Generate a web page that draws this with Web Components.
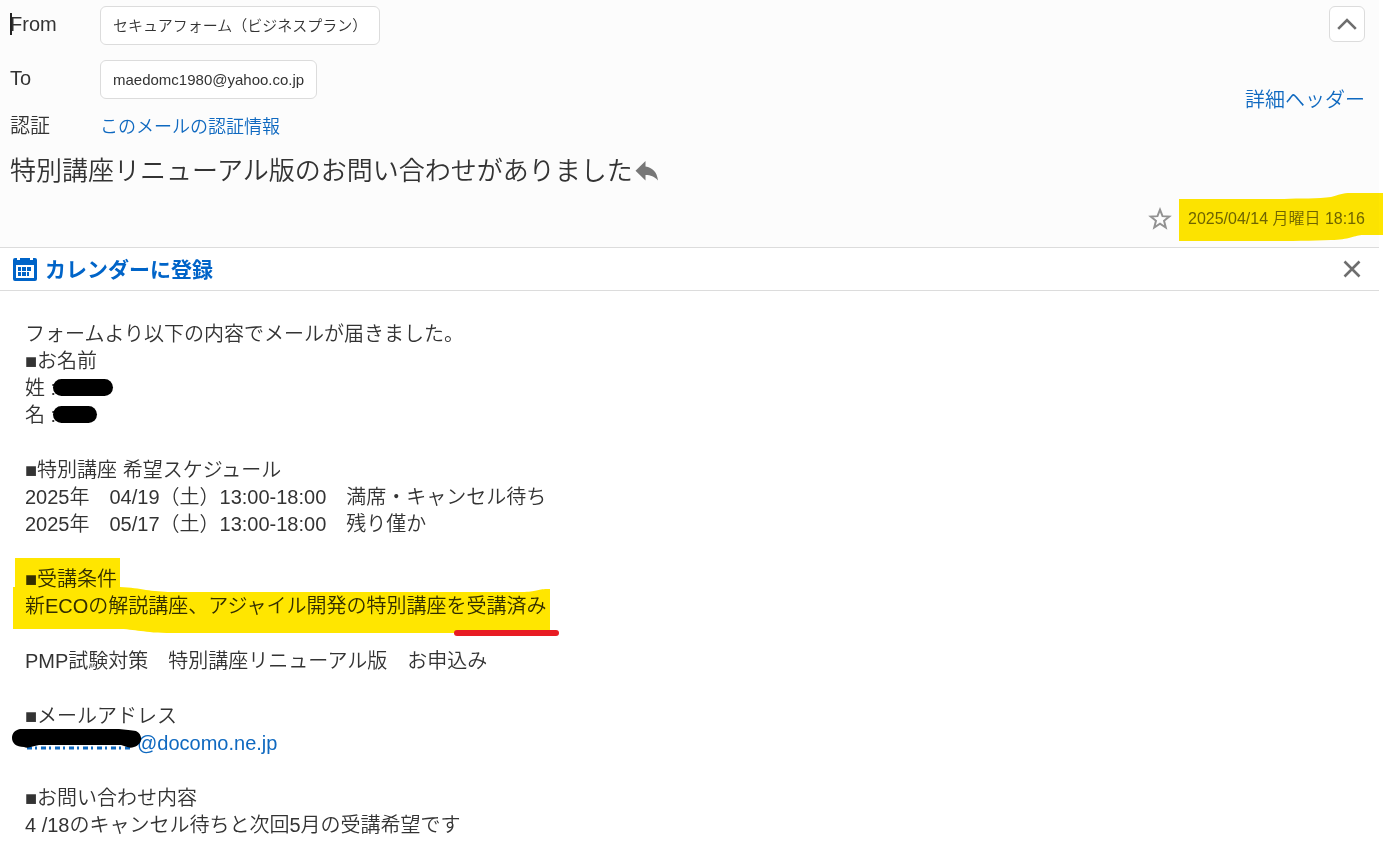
<!DOCTYPE html>
<html lang="ja">
<head>
<meta charset="utf-8">
<title>メール</title>
<style>
  html { background: #fff; }
  body {
    margin: 0;
    font: 350 20px/27px "Liberation Sans", "Noto Sans CJK JP", sans-serif;
    color: #333;
  }
</style>
</head>
<body>
<mail-view></mail-view>

<script>
const define = (name, html) => customElements.define(name, class extends HTMLElement {
  constructor() {
    super();
    const t = document.createElement('template');
    t.innerHTML = html;
    this.attachShadow({ mode: 'open' }).append(t.content.cloneNode(true));
  }
});

define('mail-chip', `
<style>
  :host { display: inline-block; }
  button {
    display: block; height: 39px; padding: 0 12px; border: 1px solid #dcdcdc; border-radius: 6px;
    background: #fff; color: #333; font: inherit; font-size: 15px; white-space: nowrap;
  }
</style>
<button type="button"><slot></slot></button>`);

define('mail-field', `
<style>
  :host { display: grid; grid-template-columns: 90px 1fr; align-items: start; }
</style>
<div><slot name="label"></slot></div>
<div><slot></slot></div>`);

define('mail-header', `
<style>
  :host {
    display: grid; grid-template-columns: 1fr auto; padding: 6px 14px 14px 10px;
    background: #fcfcfc; border-bottom: 1px solid #dcdcdc;
  }
  a { color: #0f69c0; text-decoration: none; }
  .fields { display: flex; flex-direction: column; gap: 14px; }
  .fields mail-field:first-child { margin-bottom: 1px; }
  .auth a { font-size: 18px; }
  .label { display: block; padding-top: 5px; }
  .auth .label { padding-top: 0; }
  .caret { position: relative; }
  .caret::before { content: ""; position: absolute; left: 0; top: 7px; width: 2px; height: 22px; background: #222; }
  .side { display: flex; flex-direction: column; align-items: flex-end; gap: 45px; }
  .fold {
    display: grid; place-items: center; width: 36px; height: 36px; padding: 0;
    background: #fff; border: 1px solid #dcdcdc; border-radius: 6px;
  }
  .title { grid-column: 1 / -1; display: flex; align-items: center; gap: 2px; margin-top: 12px; }
  h1 { margin: 0; font-size: 26px; line-height: 36px; font-weight: inherit; }
  .icon { display: block; padding: 0; border: 0; background: none; }
  svg { display: block; }
  .meta { grid-column: 1 / -1; display: flex; justify-content: flex-end; align-items: center; gap: 16px; margin-top: 16px; }
  .date { position: relative; font-size: 16px; line-height: 28px; color: #6f6f6f; }
  .date svg { position: absolute; right: -18px; top: -12px; mix-blend-mode: multiply; pointer-events: none; }
</style>
<div class="fields">
  <mail-field><span slot="label" class="label caret">From</span><mail-chip>セキュアフォーム（ビジネスプラン）</mail-chip></mail-field>
  <mail-field><span slot="label" class="label">To</span><mail-chip>maedomc1980@yahoo.co.jp</mail-chip></mail-field>
  <mail-field class="auth"><span slot="label" class="label">認証</span><a href="#auth">このメールの認証情報</a></mail-field>
</div>
<div class="side">
  <button class="fold" type="button" aria-label="閉じる">
    <svg width="20" height="12" viewBox="0 0 20 12" fill="none" stroke="#6e6e6e" stroke-width="2.6"><path d="M1.2 10.8 10 2l8.800 8.800"/></svg>
  </button>
  <a href="#headers">詳細ヘッダー</a>
</div>
<div class="title">
  <h1>特別講座リニューアル版のお問い合わせがありました</h1>
  <button class="icon" type="button" aria-label="返信">
    <svg width="24" height="22" viewBox="0 0 24 22" fill="#777"><path d="M10.500 1V6.500C17.500 7.500 22 12 23 20.500 19.500 16.500 15.500 15 10.500 15V20.500L.5 10.800Z"/></svg>
  </button>
</div>
<div class="meta">
  <button class="icon" type="button" aria-label="スター">
    <svg width="24" height="24" viewBox="0 0 22 22" fill="none" stroke="#929292" stroke-width="1.800"><path d="m11 2.500 2.300 5.900 6.200.3-4.800 4 1.600 6.200-5.300-3.500-5.300 3.500 1.600-6.200-4.800-4 6.200-.3Z"/></svg>
  </button>
  <div class="date">2025/04/14 月曜日 18:16
    <svg width="204" height="48" viewBox="0 0 204 48" fill="#ffe600"><path d="M0 6H105C120 5 140 6 152 4 160 2 163 0 172 0H204V42H184C176 42 170 47 152 47 130 48 100 48 80 48H0Z"/></svg>
  </div>
</div>`);

define('calendar-bar', `
<style>
  :host { display: flex; align-items: center; height: 42px; padding: 0 17px 0 12px; border-bottom: 1px solid #dcdcdc; background: #fff; }
  a { display: flex; align-items: center; gap: 7px; color: #0064c8; font-size: 21px; font-weight: 700; text-decoration: none; }
  button { margin-left: auto; padding: 0; border: 0; background: none; }
  svg { display: block; }
</style>
<a href="#calendar">
  <svg width="26" height="26" viewBox="0 0 26 26" fill="#0064c8"><path fill-rule="evenodd" d="M3 2H5V4H8V2H18V4H21V2H23Q25 2 25 4V23Q25 25 23 25H3Q1 25 1 23V4Q1 2 3 2ZM4 9V22H22V9Z"/><path d="M10 11h4v4h-4zM15 11h4v4h-4zM6 11h3v4H6zM6 16h3v4H6zM10 16h4v4h-4zM15 16h2v4h-2z"/></svg>
  カレンダーに登録
</a>
<button type="button" aria-label="閉じる">
  <svg width="20" height="20" viewBox="0 0 20 20" fill="none" stroke="#6e6e6e" stroke-width="2.600"><path d="m2.500 2.500 15 15m0-15-15 15"/></svg>
</button>`);

define('redaction-bar', `
<style>
  :host { display: inline-block; position: relative; height: 17px; border-radius: 9px; background: #000; vertical-align: -1px; }
</style>`);

define('mail-body', `
<style>
  :host { display: flex; flex-direction: column; gap: 28px; padding: 30px 25px 4px; }
  p { margin: 0; }
  a { color: #0f69c0; text-decoration: none; }
  .family { width: 60px; margin-left: -3px; }
  .given { width: 44px; margin-left: -3px; }
  .marked { position: relative; }
  .marked svg { position: absolute; left: -13px; top: -8px; pointer-events: none; }
  .marker { mix-blend-mode: multiply; }
  .mail { position: relative; display: inline-block; padding-left: 112px; }
  .mail svg { position: absolute; left: -14px; top: -2px; }
</style>
<p>フォームより以下の内容でメールが届きました。<br>■お名前<br>姓 :<redaction-bar class="family"></redaction-bar><br>名 :<redaction-bar class="given"></redaction-bar></p>
<p>■特別講座 希望スケジュール<br>2025年　04/19（土）13:00-18:00　満席・キャンセル待ち<br>2025年　05/17（土）13:00-18:00　残り僅か</p>
<p class="marked">■受講条件<br>新ECOの解説講座、アジャイル開発の特別講座を受講済み
  <svg class="marker" width="548" height="80" viewBox="0 0 548 80" fill="#ffe600"><path d="M3 0H108V29C130 30 138 34 160 34H510C525 34 525 31 535 31H538V75H160C130 75 125 71 105 71H1V29H3Z"/></svg>
  <svg width="548" height="80" viewBox="0 0 548 80" fill="none" stroke="#e81c23" stroke-width="6" stroke-linecap="round"><path d="M445 75H544"/></svg>
</p>
<p>PMP試験対策　特別講座リニューアル版　お申込み</p>
<p>■メールアドレス<br><a class="mail" href="#mail">@docomo.ne.jp<svg width="132" height="24" viewBox="0 0 132 24"><path d="M16 20H122" stroke="#0f69c0" stroke-width="3" stroke-dasharray="5 3 2 4"/><path d="M9 1H108C114 2 121 2 125 3 133 7 131 17 123 19 118 21 114 18 110 17H28C22 18 17 21 13 19 5 19 1 15 1 10 1 5 4 2 9 1Z"/></svg></a></p>
<p>■お問い合わせ内容<br>4 /18のキャンセル待ちと次回5月の受講希望です</p>`);

define('mail-view', `
<style>
  :host { display: block; margin-right: 5px; }
</style>
<mail-header></mail-header>
<calendar-bar></calendar-bar>
<mail-body></mail-body>`);
</script>
</body>
</html>
